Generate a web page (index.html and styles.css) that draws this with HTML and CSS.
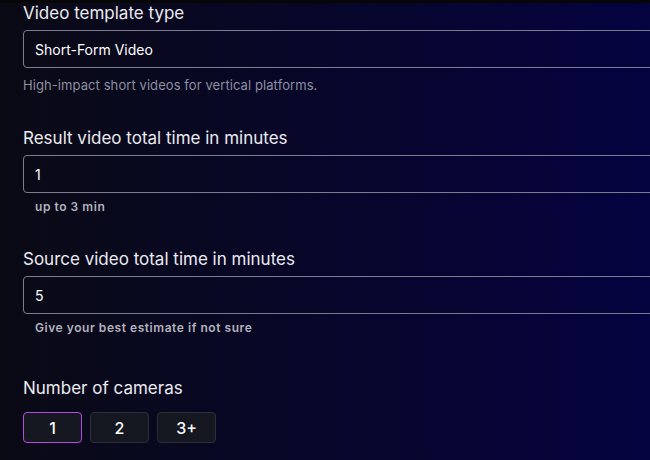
FILE: index.html
```html
<!DOCTYPE html>
<html>
<head>
<meta charset="utf-8">
<link rel="stylesheet" href="styles.css">
</head>
<body>
<div class="topband"></div>
<form class="form">
  <div class="field">
    <label class="label">Video template type</label>
    <div class="input">Short-Form Video</div>
    <p class="help help-light">High-impact short videos for vertical platforms.</p>
  </div>
  <div class="field">
    <label class="label">Result video total time in minutes</label>
    <div class="input">1</div>
    <p class="help help-bold">up to 3 min</p>
  </div>
  <div class="field">
    <label class="label">Source video total time in minutes</label>
    <div class="input">5</div>
    <p class="help help-bold">Give your best estimate if not sure</p>
  </div>
  <div class="field field-cameras">
    <label class="label label-cameras">Number of cameras</label>
    <div class="choices">
      <button type="button" class="choice selected">1</button>
      <button type="button" class="choice">2</button>
      <button type="button" class="choice">3+</button>
    </div>
  </div>
</form>
</body>
</html>
```
FILE: styles.css
```css
html, body {
  margin: 0;
  padding: 0;
  height: 100%;
}
body {
  background: linear-gradient(90deg, #0a0a15 0%, #07062a 50%, #050340 100%);
  font-family: Inter, "Noto Sans", sans-serif;
  color: #e9e9ef;
  overflow: hidden;
}
.topband {
  height: 3px;
  background: #060607;
}
.form {
  padding-left: 23px;
  width: 700px;
}
.field {
  margin-bottom: 34px;
}
.label {
  display: block;
  font-size: 17px;
  line-height: 20px;
  margin-bottom: 7px;
  color: #ebebf0;
}
.input {
  box-sizing: border-box;
  height: 38px;
  border: 1px solid #7d7d92;
  border-radius: 4px;
  padding: 0 11px;
  display: flex;
  align-items: center;
  font-size: 14px;
  color: #ffffff;
}
.help {
  margin: 0;
}
.help-light {
  margin-top: 8px;
  font-size: 13px;
  line-height: 18px;
  color: #8e8fa0;
  letter-spacing: 0.08px;
}
.help-bold {
  margin-top: 6px;
  padding-left: 12px;
  font-size: 12px;
  line-height: 16px;
  font-weight: 600;
  color: #b3b3bd;
  letter-spacing: 0.55px;
}
.field-cameras {
  margin-top: 42px;
}
.label-cameras {
  margin-bottom: 14px;
}
.choices {
  display: flex;
  gap: 8px;
}
.choice {
  box-sizing: border-box;
  width: 59px;
  height: 31px;
  background: #161821;
  border: 1px solid #2c2e3a;
  border-radius: 4px;
  color: #ffffff;
  font-family: Inter, "Noto Sans", sans-serif;
  font-size: 16px;
  font-weight: 500;
  padding: 0;
}
.choice.selected {
  border: 1.5px solid #b34ae6;
}
```
